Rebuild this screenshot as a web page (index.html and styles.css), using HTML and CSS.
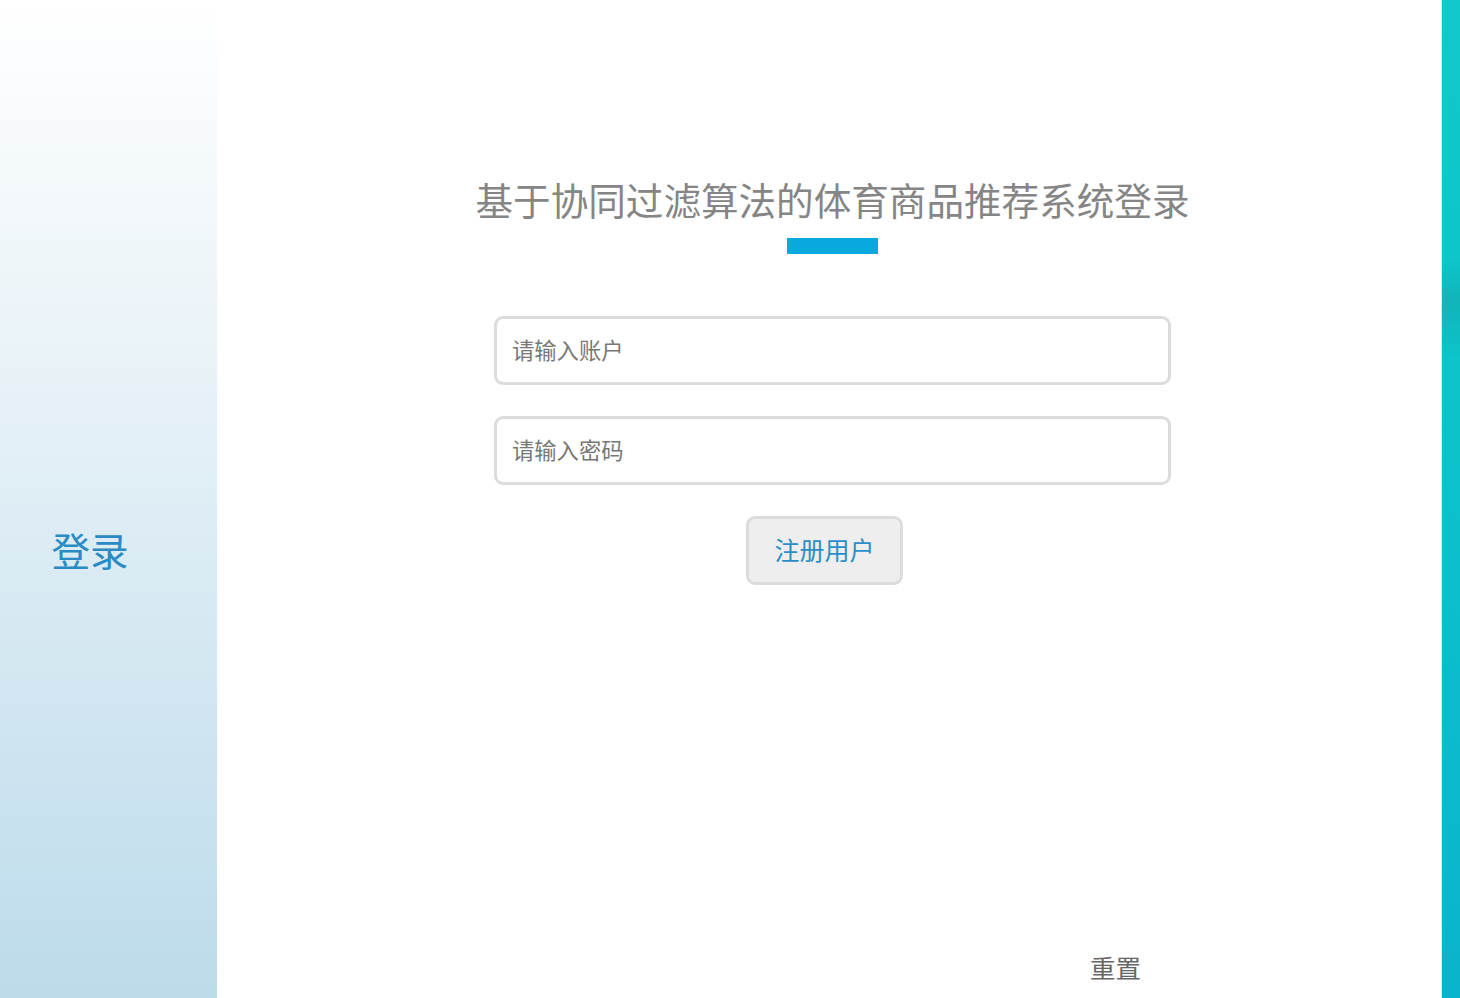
FILE: index.html
```html
<!DOCTYPE html>
<html lang="zh-CN">
<head>
<meta charset="utf-8">
<title>基于协同过滤算法的体育商品推荐系统登录</title>
<link rel="stylesheet" href="styles.css">
</head>
<body>
<div class="page">
  <aside class="side">
    <div class="side-title">登录</div>
  </aside>
  <main class="main">
    <div class="form">
      <h1 class="title">基于协同过滤算法的体育商品推荐系统登录</h1>
      <div class="bar"></div>
      <input class="field first" type="text" placeholder="请输入账户">
      <input class="field" type="password" placeholder="请输入密码">
      <button class="reg" type="button">注册用户</button>
      <div class="reset">重置</div>
    </div>
  </main>
  <div class="strip"></div>
</div>
</body>
</html>
```
FILE: styles.css
```css
html, body {
  margin: 0;
  padding: 0;
  height: 100%;
  overflow: hidden;
  background: #fff;
  font-family: "Noto Sans CJK SC", "Noto Sans", sans-serif;
}
.page {
  display: flex;
  height: 998px;
}
.side {
  width: 217px;
  flex: none;
  background: linear-gradient(180deg, #ffffff 0%, #e6f1f7 40%, #bcdbeb 100%);
  display: flex;
  align-items: center;
  justify-content: center;
}
.side-title {
  font-size: 38.5px;
  line-height: 40px;
  color: #2a8bc4;
  margin-top: 100px;
  margin-right: 37px;
  white-space: nowrap;
}
.main {
  flex: 1;
  position: relative;
}
.form {
  width: 677px;
  margin-left: 277px;
  padding-top: 179px;
  display: flex;
  flex-direction: column;
}
.title {
  margin: 0 -20px;
  font-weight: normal;
  font-size: 37.6px;
  line-height: 40px;
  color: #858585;
  text-align: center;
  white-space: nowrap;
}
.bar {
  width: 91px;
  height: 16px;
  background: #0aa9dd;
  margin: 19px 0 0 293px;
}
.field {
  box-sizing: border-box;
  width: 677px;
  height: 69px;
  border: 3px solid #dcdcdc;
  border-radius: 9px;
  padding: 0 15px 4px;
  font-family: inherit;
  font-size: 22.3px;
  color: #555;
  background: #fff;
  outline: none;
  margin-top: 31px;
}
.field.first {
  margin-top: 62px;
}
.field::placeholder {
  color: #777;
}
.reg {
  box-sizing: border-box;
  width: 157px;
  height: 69px;
  margin: 31px 0 0 252px;
  background: #eeeeee;
  border: 3px solid #dcdcdc;
  border-radius: 9px;
  font-family: inherit;
  font-size: 25px;
  color: #2a8fc8;
  padding: 0 0 4px;
  cursor: pointer;
}
.reset {
  margin: 368px 0 0 596px;
  font-size: 25.5px;
  line-height: 28px;
  color: #666;
  white-space: nowrap;
}
.strip {
  width: 19px;
  flex: none;
  border-left: 1px solid #cfeff0;
  box-sizing: border-box;
  background: linear-gradient(180deg, #11c9c8 0%, #0cc6ca 26%, #10b5b9 30%, #0cc4ca 36%, #0bbfcc 60%, #0ab4cc 100%);
}
```
